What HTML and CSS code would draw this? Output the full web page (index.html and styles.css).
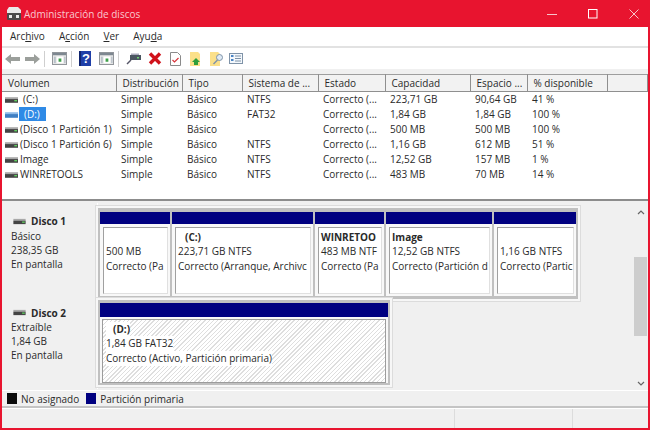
FILE: index.html
```html
<!DOCTYPE html>
<html lang="es">
<head>
  <meta charset="UTF-8" />
  <title>Administración de discos</title>
  <link rel="stylesheet" href="styles.css">
</head>
<body>
  <svg class="defs" width="0" height="0">
    <symbol id="vol" viewBox="0 0 14 8">
      <rect x="0" y="1" width="14" height="2" fill="#a8a8a8"/>
      <rect x="0" y="3" width="14" height="4" fill="#444"/>
      <rect x="10" y="4" width="3" height="1.5" fill="#5fd05f"/>
    </symbol>
    <symbol id="volsel" viewBox="0 0 14 8">
      <rect x="0" y="1" width="14" height="2" fill="#8fbbe8"/>
      <rect x="0" y="3" width="14" height="4" fill="#3f7fc4"/>
    </symbol>
    <symbol id="pane" viewBox="0 0 16 14">
      <rect x="0.5" y="0.5" width="15" height="13" fill="#e8e8e8" stroke="#8a8f94"/>
      <rect x="1" y="1" width="14" height="2.5" fill="#7d8790"/>
      <rect x="5" y="5" width="7" height="7" fill="#fff"/>
      <rect x="7" y="7" width="3" height="3.5" fill="#3fa04a"/>
      <rect x="2" y="5" width="2" height="7" fill="#b9c2ca"/>
      <rect x="13" y="5" width="1.5" height="7" fill="#b9c2ca"/>
    </symbol>
  </svg>

  <div class="window">
    <div class="titlebar">
      <svg class="app-icon" width="16" height="16" viewBox="0 0 16 16">
        <path d="M3 1h9l3 3v3H1V4z" fill="#e9e9e9"/>
        <rect x="1" y="7" width="14" height="7" rx="1" fill="#4a4a4a"/>
        <rect x="3" y="9" width="3" height="3" fill="#e9e9e9"/>
        <rect x="10" y="9" width="3" height="3" fill="#e9e9e9"/>
      </svg>
      <span class="title">Administración de discos</span>
      <div class="winbtns">
        <svg width="10" height="10" viewBox="0 0 10 10"><path d="M0 5.5h10" stroke="#f8c4ca" stroke-width="1"/></svg>
        <svg width="10" height="10" viewBox="0 0 10 10"><rect x="0.5" y="0.5" width="8.5" height="8.5" fill="none" stroke="#fff"/></svg>
        <svg width="10" height="10" viewBox="0 0 10 10"><path d="M0.5 0.5l9 9M9.5 0.5l-9 9" stroke="#f8c4ca" stroke-width="1"/></svg>
      </div>
    </div>

    <div class="menubar">
      <span>Arc<u>h</u>ivo</span>
      <span>A<u>c</u>ción</span>
      <span><u>V</u>er</span>
      <span>Ayu<u>d</u>a</span>
    </div>

    <div class="toolbar">
      <svg class="tool" width="15" height="12" viewBox="0 0 15 12"><path d="M0 6l6-5v3h9v4H6v3z" fill="#9b9f9b"/></svg>
      <svg class="tool" width="15" height="12" viewBox="0 0 15 12"><path d="M15 6L9 1v3H0v4h9v3z" fill="#9b9f9b"/></svg>
      <i class="sep"></i>
      <svg class="tool" width="15" height="13"><use href="#pane"/></svg>
      <i class="sep"></i>
      <svg class="tool" width="12" height="15" viewBox="0 0 12 15"><rect width="12" height="15" fill="#1f3fa8"/><rect x="0" y="0" width="2" height="15" fill="#10246e"/><text x="3" y="12" class="help-mark">?</text></svg>
      <svg class="tool tool-pane" width="15" height="13"><use href="#pane"/></svg>
      <i class="sep"></i>
      <svg class="tool" width="15" height="13" viewBox="0 0 15 13"><path d="M1 12l4-4" stroke="#556" stroke-width="1.5"/><rect x="4" y="3" width="11" height="5" fill="#4a5560"/><rect x="11" y="5" width="2" height="1.5" fill="#6fd06f"/><rect x="5" y="1.5" width="8" height="1.5" fill="#aab"/></svg>
      <svg class="tool tool-x" width="14" height="13" viewBox="0 0 14 13"><path d="M2 1.5l10 10M12 1.5l-10 10" stroke="#d0121b" stroke-width="3.4"/></svg>
      <svg class="tool tool-doc" width="11" height="14" viewBox="0 0 11 14"><path d="M0.5 0.5h7l3 3v10h-10z" fill="#fff" stroke="#8a8a8a"/><path d="M2.5 8l2 2 4-4" fill="none" stroke="#d8343a" stroke-width="1.2"/></svg>
      <svg class="tool tool-wide" width="13" height="14" viewBox="0 0 13 14"><path d="M0 0h8l2 2v12H0z" fill="#fbe08a"/><path d="M6 6l4 4H8v3H4v-3H2z" fill="#2f9e3c"/></svg>
      <svg class="tool" width="14" height="14" viewBox="0 0 14 14"><path d="M0 0h8l2 2v12H0z" fill="#fbe08a"/><circle cx="9.5" cy="5.5" r="3" fill="#dfeaf5" stroke="#7f93a8"/><path d="M7.5 8l-4 4" stroke="#7f93a8" stroke-width="1.5"/></svg>
      <svg class="tool" width="14" height="11" viewBox="0 0 14 11"><rect x="0.5" y="0.5" width="13" height="10" fill="#f4f8fc" stroke="#7f93a8"/><path d="M6 3h6M6 5.5h6M6 8h6" stroke="#7f93a8"/><rect x="2" y="2" width="2.5" height="2" fill="#4a84c4"/><rect x="2" y="6" width="2.5" height="2" fill="#4a84c4"/></svg>
    </div>

    <div class="volumes">
      <table class="vol-table">
        <colgroup>
          <col class="c1"><col class="c2"><col class="c3"><col class="c4"><col class="c5"><col class="c6"><col class="c7"><col class="c8"><col>
        </colgroup>
        <thead>
          <tr><th>Volumen</th><th>Distribución</th><th>Tipo</th><th>Sistema de ...</th><th>Estado</th><th>Capacidad</th><th>Espacio ...</th><th>% disponible</th><th></th></tr>
        </thead>
        <tbody>
          <tr><td><svg class="vol-icon" width="13" height="8"><use href="#vol"/></svg><span class="vol-pad">(C:)</span></td><td>Simple</td><td>Básico</td><td>NTFS</td><td>Correcto (...</td><td>223,71 GB</td><td>90,64 GB</td><td>41 %</td><td></td></tr>
          <tr><td><svg class="vol-icon" width="13" height="8"><use href="#volsel"/></svg><span class="vol-sel">(D:)</span></td><td>Simple</td><td>Básico</td><td>FAT32</td><td>Correcto (...</td><td>1,84 GB</td><td>1,84 GB</td><td>100 %</td><td></td></tr>
          <tr><td><svg class="vol-icon" width="13" height="8"><use href="#vol"/></svg>(Disco 1 Partición 1)</td><td>Simple</td><td>Básico</td><td></td><td>Correcto (...</td><td>500 MB</td><td>500 MB</td><td>100 %</td><td></td></tr>
          <tr><td><svg class="vol-icon" width="13" height="8"><use href="#vol"/></svg>(Disco 1 Partición 6)</td><td>Simple</td><td>Básico</td><td>NTFS</td><td>Correcto (...</td><td>1,16 GB</td><td>612 MB</td><td>51 %</td><td></td></tr>
          <tr><td><svg class="vol-icon" width="13" height="8"><use href="#vol"/></svg>Image</td><td>Simple</td><td>Básico</td><td>NTFS</td><td>Correcto (...</td><td>12,52 GB</td><td>157 MB</td><td>1 %</td><td></td></tr>
          <tr><td><svg class="vol-icon" width="13" height="8"><use href="#vol"/></svg>WINRETOOLS</td><td>Simple</td><td>Básico</td><td>NTFS</td><td>Correcto (...</td><td>483 MB</td><td>70 MB</td><td>14 %</td><td></td></tr>
        </tbody>
      </table>
    </div>

    <div class="disks">
      <div class="disk-list">
        <div class="disk disk-one">
          <div class="disk-info">
            <div class="disk-name"><svg width="13" height="7"><use href="#vol"/></svg>Disco 1</div>
            <div>Básico</div>
            <div>238,35 GB</div>
            <div>En pantalla</div>
          </div>
          <div class="parts">
            <div class="part w-a"><div class="part-head"></div><div class="part-body"><b></b><span>500 MB</span><span>Correcto (Pa</span></div></div>
            <div class="part w-b"><div class="part-head"></div><div class="part-body"><b class="indent">(C:)</b><span>223,71 GB NTFS</span><span>Correcto (Arranque, Archivc</span></div></div>
            <div class="part w-c"><div class="part-head"></div><div class="part-body"><b>WINRETOO</b><span>483 MB NTF</span><span>Correcto (Pa</span></div></div>
            <div class="part w-d"><div class="part-head"></div><div class="part-body"><b>Image</b><span>12,52 GB NTFS</span><span>Correcto (Partición d</span></div></div>
            <div class="part w-e"><div class="part-head"></div><div class="part-body"><b></b><span>1,16 GB NTFS</span><span>Correcto (Partic</span></div></div>
          </div>
        </div>
        <div class="disk disk-two">
          <div class="disk-info">
            <div class="disk-name"><svg width="13" height="7"><use href="#vol"/></svg>Disco 2</div>
            <div>Extraíble</div>
            <div>1,84 GB</div>
            <div>En pantalla</div>
          </div>
          <div class="parts">
            <div class="part w-f"><div class="part-head"></div><div class="part-body hatched"><b class="indent">(D:)</b><span>1,84 GB FAT32</span><span>Correcto (Activo, Partición primaria)</span></div></div>
          </div>
        </div>
      </div>
      <div class="scrollbar">
        <svg width="8" height="5" viewBox="0 0 8 5"><path d="M1 4l3-3 3 3" fill="none" stroke="#666" stroke-width="1.2"/></svg>
        <div class="track"><div class="thumb"></div></div>
        <svg width="8" height="5" viewBox="0 0 8 5"><path d="M1 1l3 3 3-3" fill="none" stroke="#666" stroke-width="1.2"/></svg>
      </div>
    </div>

    <div class="legend">
      <i class="swatch black"></i><span>No asignado</span>
      <i class="swatch navy"></i><span>Partición primaria</span>
    </div>

    <div class="statusbar">
      <div class="st-a"></div><div class="st-b"></div><div class="st-c"></div>
    </div>
  </div>
</body>
</html>
```

FILE: styles.css
```css
* { box-sizing: border-box; margin: 0; padding: 0; }
html, body { width: 650px; height: 430px; overflow: hidden; }
body { font-family: "Open Sans", "Noto Sans", sans-serif; font-size: 10px; color: #2a2a2a; background: #f0f0f0; }
.defs { display: block; height: 0; }

.window {
  width: 650px;
  height: 430px;
  display: flex;
  flex-direction: column;
  border: 2px solid #e8142f;
  border-top: 0;
  background: #f0f0f0;
}

.titlebar {
  height: 27px;
  flex: none;
  margin: 0 -2px;
  padding-left: 6px;
  display: flex;
  align-items: center;
  background: #e8142f;
  color: #f9c9cf;
  font-size: 10px;
}
.app-icon { margin-right: 2px; }
.winbtns { margin-left: auto; display: flex; gap: 31px; padding-right: 11px; }

.menubar {
  height: 21px;
  flex: none;
  display: flex;
  align-items: center;
  gap: 14px;
  padding: 0 0 2px 8px;
  background: #fff;
  border-bottom: 2px solid #e2e2e2;
}

.toolbar {
  height: 21px;
  flex: none;
  display: flex;
  align-items: center;
  padding-left: 3px;
  background: #fff;
}
.tool { margin-right: 5px; flex: none; }
.tool-pane { margin-left: 3px; }
.tool-x { margin-left: 2px; }
.tool-doc { margin-left: 3px; }
.tool-wide { margin-left: 4px; margin-right: 7px; }
.sep { width: 1px; height: 16px; background: #cfcfcf; margin: 0 7px 0 -1px; }
.help-mark { fill: #fff; font-size: 13px; font-weight: 700; font-family: "Liberation Sans", sans-serif; }

.volumes {
  height: 132px;
  flex: none;
  padding-top: 5px;
  background: linear-gradient(#f0f0f0 5px, #fff 5px);
  border-bottom: 2px solid #8c8c8c;
  overflow: hidden;
}
.vol-table { width: 646px; table-layout: fixed; border-collapse: collapse; background: #fff; }
.c1 { width: 114px; } .c2 { width: 66px; } .c3 { width: 60px; } .c4 { width: 76px; }
.c5 { width: 67px; } .c6 { width: 85px; } .c7 { width: 57px; } .c8 { width: 80px; }
.vol-table th {
  height: 17px;
  padding-left: 6px;
  text-align: left;
  font-weight: 400;
  background: #f2f2f2;
  border-top: 1px solid #9e9e9e;
  border-right: 1px solid #8f8f8f;
  border-bottom: 1px solid #8f8f8f;
  white-space: nowrap;
  overflow: hidden;
}
.vol-table td { height: 15px; line-height: 14px; padding-left: 5px; white-space: nowrap; overflow: hidden; }
.vol-table td:first-child { padding-left: 3px; }
.vol-icon { margin-right: 2px; vertical-align: -1px; }
.vol-pad { padding-left: 3px; }
.vol-sel { background: #2f8ae6; color: #fff; padding: 0 6px 0 5px; margin-left: -1px; display: inline-block; }

.disks { flex: 1; min-height: 0; display: flex; background: #f0f0f0; padding-top: 2px; }
.disk-list { flex: 1; display: flex; flex-direction: column; }
.disk { display: flex; flex: none; }
.disk-one { height: 94px; }
.disk-two { height: 92px; }
.disk-info {
  width: 96px;
  flex: none;
  padding: 10px 0 0 9px;
  line-height: 14px;
  border-right: 1px solid #fff;
}
.disk-two .disk-info { padding-top: 8px; }
.disk-name { font-weight: 700; display: flex; align-items: center; gap: 5px; margin-left: 2px; height: 16px; }
.disk-two .disk-name { height: 15px; }

.parts {
  display: flex;
  gap: 2px;
  align-self: flex-start;
  margin-top: 5px;
  padding: 4px 2px 3px;
  background: #c0c0c0;
  box-shadow: 0 0 0 2px #f7f7f7, 0 0 0 3px #dcdcdc;
}
.disk-two .parts { margin-top: 3px; padding: 3px 2px 2px; }
.part { display: flex; flex-direction: column; background: #f8f8f8; }
.w-a { width: 70px; } .w-b { width: 141px; } .w-c { width: 69px; } .w-d { width: 106px; } .w-e { width: 82px; }
.w-f { width: 288px; }
.part-head { height: 12px; background: #000080; margin-bottom: 2px; }
.disk-two .part-head { height: 14px; }
.part-body {
  height: 67px;
  margin: 1px 2px 2px 3px;
  padding: 2px 0 0 2px;
  background: #fff;
  border: 1px solid #e0e0e0;
  border-left-color: #a0a0a0;
  border-top-color: #a0a0a0;
  display: flex;
  flex-direction: column;
  align-items: flex-start;
  line-height: 15px;
  overflow: hidden;
  white-space: nowrap;
}
.part-body b { height: 14px; line-height: 14px; }
.part-body b.indent { padding-left: 7px; }
.hatched {
  height: 64px;
  margin: 0 2px;
  padding-left: 3px;
  border: 1px solid #9c9c9c;
  background: repeating-linear-gradient(135deg, #dedede 0, #dedede 1px, #fff 1px, #fff 3px);
}
.hatched b, .hatched span { background: #fff; }

.scrollbar {
  width: 15px;
  flex: none;
  margin-top: 4px;
  display: flex;
  flex-direction: column;
  align-items: center;
  justify-content: space-between;
  padding: 3px 0 4px;
  background: #f0f0f0;
}
.track { flex: 1; width: 100%; padding-top: 42px; }
.thumb { height: 79px; margin: 0 1px; background: #cdcdcd; }

.legend {
  height: 18px;
  flex: none;
  display: flex;
  align-items: center;
  padding-left: 5px;
  border-top: 1px solid #fff;
  border-bottom: 2px solid #c4c4c4;
}
.swatch { width: 10px; height: 11px; margin-right: 4px; }
.black { background: #0c0c0c; }
.navy { background: #000080; margin-left: 7px; }

.statusbar { height: 20px; flex: none; display: flex; border-top: 1px solid #fff; }
.st-a { width: 453px; border-right: 1px solid #dcdcdc; }
.st-b { width: 118px; border-right: 1px solid #dcdcdc; }
.st-c { flex: 1; }
```
